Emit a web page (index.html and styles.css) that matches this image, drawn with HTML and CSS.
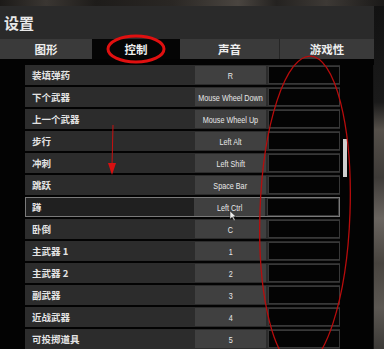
FILE: index.html
```html
<!DOCTYPE html>
<html lang="zh">
<head>
    <meta charset="UTF-8">
    <meta name="viewport" content="width=device-width, initial-scale=1.0">
    <title>设置 - 控制</title>
    <link rel="stylesheet" href="styles.css">
</head>
<body>
    <div class="top-strip"></div>
    <div class="window">
        <div class="panel">
            <div class="title">设置</div>
            <div class="tabs">
                <div class="tab tab-graphics">图形</div>
                <div class="tab tab-controls active">控制</div>
                <div class="tab tab-sound">声音</div>
                <div class="tab tab-gameplay">游戏性</div>
            </div>
            <div class="content">
                <div class="bind-list">
                    <div class="bind-row"><span class="bind-name">装填弹药</span><span class="bind-key"><span>R</span></span><span class="bind-alt"></span></div>
                    <div class="bind-row"><span class="bind-name">下个武器</span><span class="bind-key"><span>Mouse Wheel Down</span></span><span class="bind-alt"></span></div>
                    <div class="bind-row"><span class="bind-name">上一个武器</span><span class="bind-key"><span>Mouse Wheel Up</span></span><span class="bind-alt"></span></div>
                    <div class="bind-row"><span class="bind-name">步行</span><span class="bind-key"><span>Left Alt</span></span><span class="bind-alt"></span></div>
                    <div class="bind-row"><span class="bind-name">冲刺</span><span class="bind-key"><span>Left Shift</span></span><span class="bind-alt"></span></div>
                    <div class="bind-row"><span class="bind-name">跳跃</span><span class="bind-key"><span>Space Bar</span></span><span class="bind-alt"></span></div>
                    <div class="bind-row hover"><span class="bind-name">蹲</span><span class="bind-key"><span>Left Ctrl</span></span><span class="bind-alt"></span></div>
                    <div class="bind-row"><span class="bind-name">卧倒</span><span class="bind-key"><span>C</span></span><span class="bind-alt"></span></div>
                    <div class="bind-row"><span class="bind-name">主武器 1</span><span class="bind-key"><span>1</span></span><span class="bind-alt"></span></div>
                    <div class="bind-row"><span class="bind-name">主武器 2</span><span class="bind-key"><span>2</span></span><span class="bind-alt"></span></div>
                    <div class="bind-row"><span class="bind-name">副武器</span><span class="bind-key"><span>3</span></span><span class="bind-alt"></span></div>
                    <div class="bind-row"><span class="bind-name">近战武器</span><span class="bind-key"><span>4</span></span><span class="bind-alt"></span></div>
                    <div class="bind-row"><span class="bind-name">可投掷道具</span><span class="bind-key"><span>5</span></span><span class="bind-alt"></span></div>
                </div>
                <div class="scroll-track"><div class="scroll-thumb"></div></div>
            </div>
        </div>
        <div class="backdrop"></div>
    </div>

    <!-- 红色标注 + 鼠标指针 -->
    <svg class="marks" width="384" height="349" viewBox="0 0 384 349">
        <ellipse cx="136" cy="49" rx="28" ry="13" fill="none" stroke="#e01010" stroke-width="3"/>
        <line x1="113" y1="125" x2="112" y2="166" stroke="#c81010" stroke-width="1"/>
        <polygon points="108,163 116,163 112,175" fill="#d81010"/>
        <ellipse cx="305" cy="212" rx="45" ry="156" fill="none" stroke="#b80c0c" stroke-width="1.3" transform="rotate(2 305 212)"/>
        <path d="M230 211 L230 219 L232.2 217.2 L234 220.8 L235.2 220.2 L233.4 216.7 L235.9 216.5 Z" fill="#eee" stroke="#222" stroke-width="0.5"/>
    </svg>
</body>
</html>
```

FILE: styles.css
```css
body {
    margin: 0;
    width: 384px;
    height: 349px;
    overflow: hidden;
    background-color: #000;
    font-family: "Noto Sans CJK SC", "Liberation Sans", sans-serif;
    color: #e6e6e6;
    position: relative;
}

.top-strip {
    height: 6px;
    background: linear-gradient(90deg, #1c1a18 0%, #3a3632 12%, #1e1c1a 25%, #2a2724 45%, #4a4540 62%, #242220 72%, #3d3935 85%, #1a1918 100%);
}

.window {
    display: flex;
    height: 343px;
}

.panel {
    width: 374px;
    display: flex;
    flex-direction: column;
}

.title {
    height: 36px;
    background-color: #2a2a2a;
    font-size: 15px;
    line-height: 33px;
    padding-left: 4px;
    font-weight: bold;
    color: #e8e8e8;
}

.tabs {
    display: flex;
    height: 20px;
    background-color: #2a2a2a;
}

.tab {
    background-color: #3a3a3a;
    font-size: 11.5px;
    font-weight: bold;
    line-height: 20px;
    text-align: center;
    color: #eee;
}

.tab-graphics { width: 92px; }
.tab-controls { width: 88px; }
.tab-sound { width: 99px; border-right: 1px solid #262626; }
.tab-gameplay { width: 94px; }

.tab.active {
    background-color: #050505;
}

.content {
    flex: 1;
    display: flex;
    background-color: #030303;
    padding: 6px 0 0 25px;
}

.bind-list {
    width: 315px;
    display: flex;
    flex-direction: column;
    gap: 2px;
}

.bind-row {
    height: 20px;
    flex-shrink: 0;
    display: flex;
    align-items: center;
    background-color: #2c2c2c;
    box-sizing: border-box;
}

.bind-row.hover {
    background-color: #202020;
    border: 1px solid #7a7a7a;
}

.bind-name {
    width: 163px;
    padding-left: 7px;
    font-size: 9.5px;
    font-weight: bold;
    color: #e4e4e4;
}

.bind-row.hover .bind-name {
    padding-left: 6px;
}

.bind-key {
    width: 71px;
    height: 18px;
    display: flex;
    justify-content: center;
    align-items: center;
    background-color: #404040;
    font-family: "Liberation Sans", "DejaVu Sans", sans-serif;
    font-size: 9.5px;
    color: #e8e8e8;
    white-space: nowrap;
}

/* 游戏里的按键字体是窄体，这里横向压缩 */
.bind-key span {
    flex-shrink: 0;
    transform: scaleX(0.76);
}

.bind-alt {
    width: 70px;
    height: 16px;
    margin-left: 2px;
    background-color: #040404;
    border: 1px solid #383838;
}

.scroll-track {
    width: 34px;
    padding-left: 3px;
    box-sizing: border-box;
    border-right: 1px solid #141414;
}

.scroll-thumb {
    width: 4px;
    height: 38px;
    margin-top: 74px;
    background-color: #cfcfcf;
}

.backdrop {
    width: 10px;
    background: linear-gradient(180deg, #121212 0%, #1a1a1a 28%, #55504a 36%, #3e3b38 50%, #6a6560 62%, #48443f 75%, #5c5853 88%, #3c3a37 100%);
}

.marks {
    position: absolute;
    top: 0;
    left: 0;
    pointer-events: none;
}
```
